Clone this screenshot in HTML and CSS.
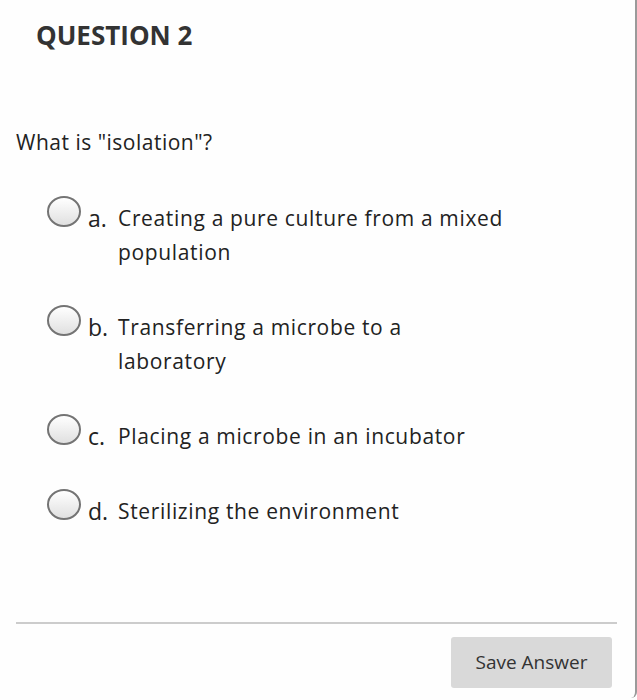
FILE: index.html
```html
<!DOCTYPE html>
<html lang="en">
<head>
    <meta charset="UTF-8">
    <meta name="viewport" content="width=device-width, initial-scale=1.0">
    <title>Question 2</title>
    <link rel="stylesheet" href="styles.css">
</head>
<body>
    <div class="panel">
        <h2 class="title">QUESTION 2</h2>
        <p class="question">What is "isolation"?</p>
        <form class="answers" id="answerForm">
            <label class="option">
                <input type="radio" name="answer" value="a">
                <span class="radio"></span>
                <span class="letter">a.</span>
                <span class="text">Creating a pure culture from a mixed<br>population</span>
            </label>
            <label class="option">
                <input type="radio" name="answer" value="b">
                <span class="radio"></span>
                <span class="letter">b.</span>
                <span class="text">Transferring a microbe to a<br>laboratory</span>
            </label>
            <label class="option">
                <input type="radio" name="answer" value="c">
                <span class="radio"></span>
                <span class="letter">c.</span>
                <span class="text">Placing a microbe in an incubator</span>
            </label>
            <label class="option">
                <input type="radio" name="answer" value="d">
                <span class="radio"></span>
                <span class="letter">d.</span>
                <span class="text">Sterilizing the environment</span>
            </label>
        </form>
        <div class="footer">
            <button type="button" class="save-button">Save Answer</button>
        </div>
    </div>
</body>
</html>
```

FILE: styles.css
```css
body {
    margin: 0;
    font-family: "Open Sans", Arial, sans-serif;
    background-color: #fefefe;
    color: #333;
}
.panel {
    box-sizing: border-box;
    width: 637px;
    height: 698px;
    border-right: 2px solid #9a9a9a;
    border-bottom-right-radius: 6px;
    display: flex;
    flex-direction: column;
}
.title {
    margin: 17px 0 0 36px;
    font-size: 26px;
    font-weight: 700;
    color: #333;
}
.question {
    margin: 75px 0 0 16px;
    font-size: 21px;
    letter-spacing: 0.5px;
    color: #222;
}
.answers {
    margin: 45px 0 0 47px;
    display: flex;
    flex-direction: column;
    gap: 41px;
}
.option {
    display: flex;
    align-items: flex-start;
    line-height: 34px;
    color: #222;
    cursor: pointer;
}
.option input {
    display: none;
}
.radio {
    flex: none;
    box-sizing: border-box;
    width: 34px;
    height: 31px;
    margin-top: -5px;
    border: 2px solid #747474;
    border-radius: 50%;
    background: linear-gradient(#fff, #e0e0e0);
}
.letter {
    flex: none;
    width: 30px;
    margin-left: 7px;
    font-size: 23px;
}
.text {
    font-size: 21px;
    letter-spacing: 0.65px;
}
.option input:checked + .radio {
    background: radial-gradient(#444 35%, #fff 40%);
}
.footer {
    margin: auto 18px 10px 16px;
    padding: 13px 5px 0 0;
    border-top: 2px solid #ccc;
    display: flex;
    justify-content: flex-end;
}
.save-button {
    font-family: "Open Sans", Arial, sans-serif;
    font-size: 19px;
    color: #333;
    background-color: #d9d9d9;
    border: none;
    border-radius: 3px;
    width: 161px;
    height: 51px;
    padding-bottom: 3px;
    cursor: pointer;
}
```
